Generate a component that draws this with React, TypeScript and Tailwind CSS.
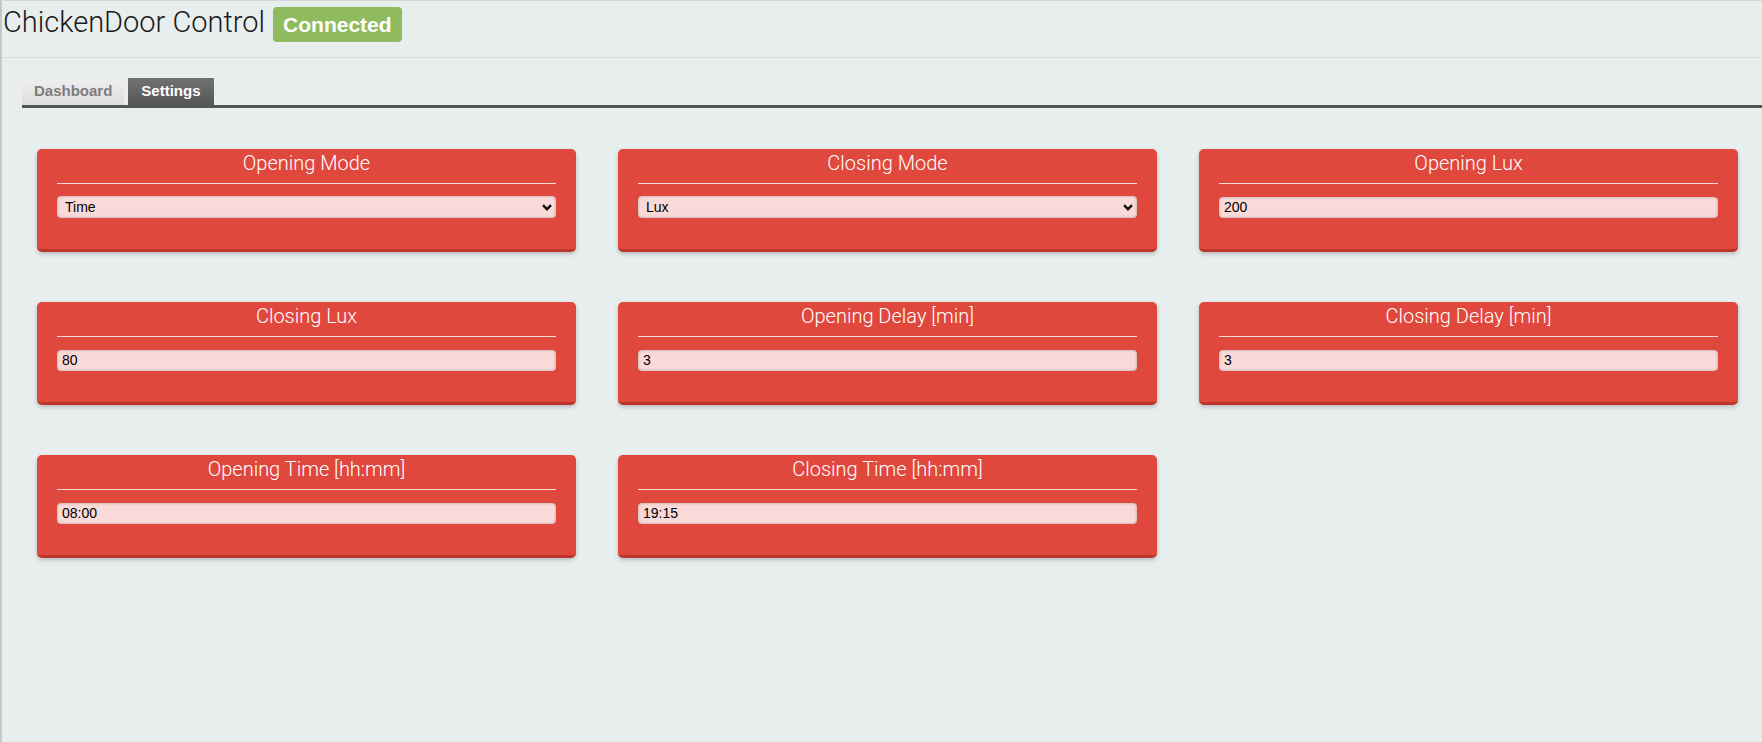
import React from "react";

type Field = {
  title: string;
  kind: "select" | "input";
  value: string;
  options?: string[];
};

const fields: Field[] = [
  { title: "Opening Mode", kind: "select", value: "Time", options: ["Time", "Lux"] },
  { title: "Closing Mode", kind: "select", value: "Lux", options: ["Time", "Lux"] },
  { title: "Opening Lux", kind: "input", value: "200" },
  { title: "Closing Lux", kind: "input", value: "80" },
  { title: "Opening Delay [min]", kind: "input", value: "3" },
  { title: "Closing Delay [min]", kind: "input", value: "3" },
  { title: "Opening Time [hh:mm]", kind: "input", value: "08:00" },
  { title: "Closing Time [hh:mm]", kind: "input", value: "19:15" },
];

const light = { fontFamily: "Roboto, 'Liberation Sans', sans-serif", fontWeight: 300 };

function SettingCard({ field }: { field: Field }) {
  return (
    <div className="h-[103px] rounded-[5px] border-b-[3px] border-[#bd362d] bg-[#e0473d] px-5 pt-[2px] shadow-[0_2px_4px_rgba(0,0,0,0.22)]">
      <div className="text-center text-[20px] leading-[24px] text-white" style={light}>
        {field.title}
      </div>
      <div className="mt-[8px] h-px bg-[#f3dcd9]" />
      {field.kind === "select" ? (
        <div className="relative mt-[12px]">
          <select
            defaultValue={field.value}
            className="block h-[22px] w-full appearance-none rounded-[4px] bg-[#f9dad8] pl-[8px] text-[14px] leading-[22px] text-black shadow-[inset_0_0_3px_rgba(0,0,0,0.3)] outline-none"
            style={{ fontFamily: "'Liberation Sans', Arial, sans-serif" }}
          >
            {field.options?.map((o) => (
              <option key={o}>{o}</option>
            ))}
          </select>
          <svg
            className="pointer-events-none absolute right-[4px] top-[8px]"
            width="10"
            height="7"
            viewBox="0 0 10 7"
          >
            <path d="M1 1.2 L5 5.2 L9 1.2" stroke="#111" strokeWidth="2.4" fill="none" />
          </svg>
        </div>
      ) : (
        <input
          defaultValue={field.value}
          className="mt-[13px] block h-[21px] w-full rounded-[4px] bg-[#f9dad8] pl-[5px] text-[14px] text-black shadow-[inset_0_0_3px_rgba(0,0,0,0.3)] outline-none"
          style={{ fontFamily: "'Liberation Sans', Arial, sans-serif" }}
        />
      )}
    </div>
  );
}

export default function App() {
  return (
    <div className="min-h-screen w-full border-l-2 border-t border-l-[#c4c8c8] border-t-[#d3d7d7] bg-[#e8eeee]">
      <header className="flex h-[57px] items-start gap-[8px] border-b border-[#d5dada] pl-px">
        <h1 className="mt-[6px] text-[29px] leading-[30px] text-[#1a1a1a]" style={light}>
          ChickenDoor Control
        </h1>
        <span
          className="mt-[6px] flex h-[35px] items-center rounded-[4px] bg-[#8fbb5e] px-[10px] text-[21px] font-bold text-white"
          style={{ fontFamily: "'Liberation Sans', Arial, sans-serif" }}
        >
          Connected
        </span>
      </header>

      <nav
        className="ml-[20px] mt-[20px] flex gap-[4px] border-b-[3px] border-[#555]"
        style={{ fontFamily: "'Liberation Sans', Arial, sans-serif" }}
      >
        <button className="h-[27px] bg-gradient-to-b from-[#efefef] to-[#dddddd] px-[12px] text-[15px] font-bold text-[#7d7d7d]">
          Dashboard
        </button>
        <button className="h-[27px] bg-gradient-to-b from-[#727272] to-[#565656] px-[13px] text-[15px] font-bold text-white">
          Settings
        </button>
      </nav>

      <main className="ml-[35px] mt-[41px] grid w-[1701px] grid-cols-3 gap-x-[42px] gap-y-[50px]">
        {fields.map((f) => (
          <SettingCard key={f.title} field={f} />
        ))}
      </main>
    </div>
  );
}
